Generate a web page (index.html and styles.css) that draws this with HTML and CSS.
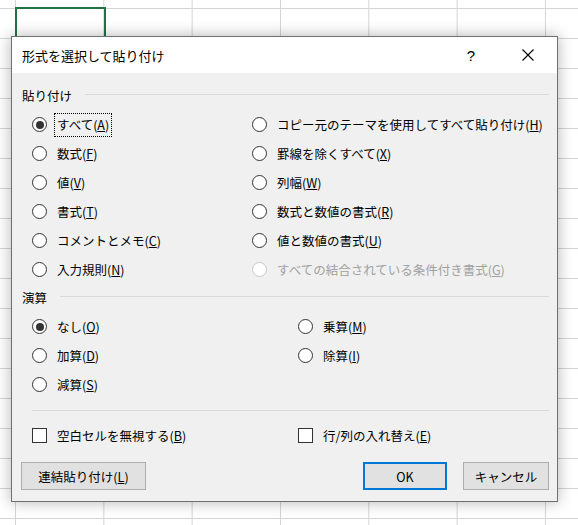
FILE: index.html
```html
<!DOCTYPE html>
<html lang="ja">
<head>
<meta charset="utf-8">
<title>形式を選択して貼り付け</title>
<link rel="stylesheet" href="styles.css">
</head>
<body>
<div class="sheet">
  <div class="cell-sel"></div>
  <div class="dialog">
    <div class="titlebar">
      <span class="title">形式を選択して貼り付け</span>
      <span class="tb-btn help">?</span>
      <span class="tb-btn close">
        <svg width="12" height="12" viewBox="0 0 12 12"><path d="M0.5 0.5L11.5 11.5M11.5 0.5L0.5 11.5" stroke="#000" stroke-width="1.1" fill="none"/></svg>
      </span>
    </div>
    <div class="body">
      <div class="group-head"><span class="group-label">貼り付け</span><span class="group-line"></span></div>
      <div class="opts paste">
        <div class="opt"><span class="radio checked"></span><span class="lbl focus">すべて(<u>A</u>)</span></div>
        <div class="opt"><span class="radio"></span><span class="lbl">コピー元のテーマを使用してすべて貼り付け(<u>H</u>)</span></div>
        <div class="opt"><span class="radio"></span><span class="lbl">数式(<u>F</u>)</span></div>
        <div class="opt"><span class="radio"></span><span class="lbl">罫線を除くすべて(<u>X</u>)</span></div>
        <div class="opt"><span class="radio"></span><span class="lbl">値(<u>V</u>)</span></div>
        <div class="opt"><span class="radio"></span><span class="lbl">列幅(<u>W</u>)</span></div>
        <div class="opt"><span class="radio"></span><span class="lbl">書式(<u>T</u>)</span></div>
        <div class="opt"><span class="radio"></span><span class="lbl">数式と数値の書式(<u>R</u>)</span></div>
        <div class="opt"><span class="radio"></span><span class="lbl">コメントとメモ(<u>C</u>)</span></div>
        <div class="opt"><span class="radio"></span><span class="lbl">値と数値の書式(<u>U</u>)</span></div>
        <div class="opt"><span class="radio"></span><span class="lbl">入力規則(<u>N</u>)</span></div>
        <div class="opt disabled"><span class="radio"></span><span class="lbl">すべての結合されている条件付き書式(<u>G</u>)</span></div>
      </div>
      <div class="group-head second"><span class="group-label">演算</span><span class="group-line"></span></div>
      <div class="opts ops">
        <div class="opt"><span class="radio checked"></span><span class="lbl">なし(<u>O</u>)</span></div>
        <div class="opt"><span class="radio"></span><span class="lbl">乗算(<u>M</u>)</span></div>
        <div class="opt"><span class="radio"></span><span class="lbl">加算(<u>D</u>)</span></div>
        <div class="opt"><span class="radio"></span><span class="lbl">除算(<u>I</u>)</span></div>
        <div class="opt"><span class="radio"></span><span class="lbl">減算(<u>S</u>)</span></div>
      </div>
      <div class="separator"></div>
      <div class="opts checks">
        <div class="opt"><span class="check"></span><span class="lbl">空白セルを無視する(<u>B</u>)</span></div>
        <div class="opt"><span class="check"></span><span class="lbl">行/列の入れ替え(<u>E</u>)</span></div>
      </div>
      <div class="buttons">
        <button class="btn link">連結貼り付け(<u>L</u>)</button>
        <span class="spacer"></span>
        <button class="btn ok">OK</button>
        <button class="btn cancel">キャンセル</button>
      </div>
    </div>
  </div>
</div>
</body>
</html>
```
FILE: styles.css
```css
html, body {
  margin: 0;
  padding: 0;
}
body {
  font-family: "Noto Sans CJK JP", "Noto Sans", sans-serif;
  font-size: 12.5px;
  color: #000;
}
.sheet {
  position: relative;
  width: 578px;
  height: 525px;
  overflow: hidden;
  background-color: #fff;
  background-image:
    linear-gradient(to right, #d4d4d4 1px, transparent 1px),
    linear-gradient(to bottom, #d4d4d4 1px, transparent 1px);
  background-size: 88.33px 30px;
  background-position: 15px 8px;
}
.cell-sel {
  position: absolute;
  left: 15px;
  top: 7px;
  width: 91px;
  height: 32px;
  box-sizing: border-box;
  border: 2px solid #217346;
}
.dialog {
  position: absolute;
  left: 11px;
  top: 36px;
  width: 547px;
  height: 466px;
  box-sizing: border-box;
  border: 1px solid #707070;
  background: #f0f0f0;
  box-shadow: 0 0 14px rgba(0, 0, 0, 0.3);
  display: flex;
  flex-direction: column;
}
.titlebar {
  height: 36px;
  background: #fff;
  display: flex;
  align-items: center;
  padding: 0 6px 0 10px;
}
.title {
  flex: 1;
  font-size: 13px;
}
.tb-btn {
  width: 46px;
  height: 36px;
  display: flex;
  align-items: center;
  justify-content: center;
}
.help {
  font-family: "Liberation Sans", sans-serif;
  font-size: 15px;
  margin-right: 11px;
  margin-left: -2px;
}
.body {
  flex: 1;
  padding: 0 8px 0 10px;
  display: flex;
  flex-direction: column;
}
.group-head {
  margin-top: 12px;
  height: 20px;
  display: flex;
  align-items: center;
}
.group-head.second {
  margin-top: 3px;
}
.group-line {
  flex: 1;
  height: 1px;
  background: #dadada;
  margin-left: 13px;
  margin-top: -2px;
}
.opts {
  display: grid;
  grid-auto-rows: 29px;
  margin-left: 10px;
}
.paste {
  margin-top: 5px;
  grid-template-columns: 220px 1fr;
}
.ops {
  margin-top: 5px;
  grid-template-columns: 266px 1fr;
}
.checks {
  margin-top: 10px;
  grid-template-columns: 266px 1fr;
}
.opt {
  display: flex;
  align-items: center;
  white-space: nowrap;
}
.radio {
  width: 15px;
  height: 15px;
  box-sizing: border-box;
  border: 1px solid #333;
  border-radius: 50%;
  background: #fff;
  position: relative;
  flex: none;
}
.radio.checked::after {
  content: "";
  position: absolute;
  left: 2.5px;
  top: 2.5px;
  width: 8px;
  height: 8px;
  border-radius: 50%;
  background: #333;
}
.check {
  width: 15px;
  height: 15px;
  box-sizing: border-box;
  border: 1px solid #333;
  background: #fff;
  flex: none;
}
.lbl {
  margin-left: 7px;
  padding: 0 2px;
  line-height: 22px;
  border: 1px dotted transparent;
}
.lbl.focus {
  border-color: #000;
}
.disabled .radio {
  border-color: #c8c8c8;
}
.disabled .lbl {
  color: #a0a0a0;
}
.separator {
  margin-top: 11px;
  margin-left: 10px;
  height: 1px;
  background: #dadada;
}
.buttons {
  margin-top: 12px;
  display: flex;
  height: 28px;
}
.spacer {
  flex: 1;
}
.btn {
  font-family: inherit;
  font-size: 12.5px;
  color: #000;
  background: #e1e1e1;
  border: 1px solid #adadad;
  padding: 0;
  margin: 0;
  height: 28px;
  box-sizing: border-box;
}
.btn.link {
  width: 125px;
  margin-left: -1px;
}
.btn.ok {
  width: 84px;
  margin-right: 1px;
  border: 2px solid #0078d7;
}
.btn.cancel {
  width: 86px;
  margin-left: 15px;
}
```
